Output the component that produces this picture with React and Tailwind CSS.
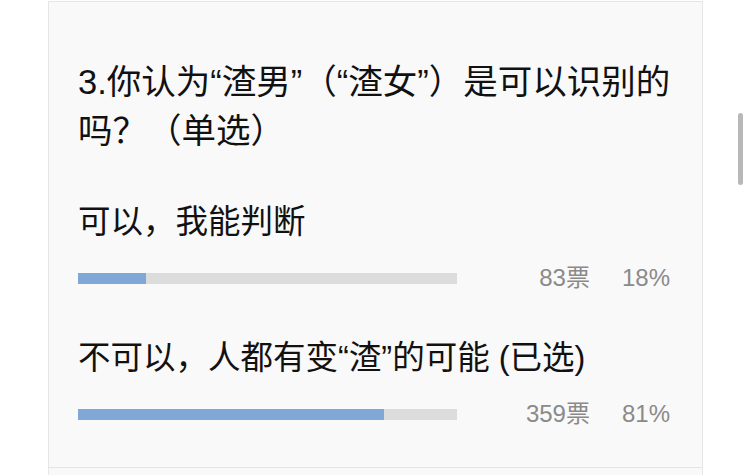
import React from "react";

const options = [
  { label: "可以，我能判断", votes: 83, percent: 18, fill: "w-[68px]" },
  { label: "不可以，人都有变“渣”的可能 (已选)", votes: 359, percent: 81, fill: "w-[306px]" },
];

export default function App() {
  return (
    <div
      className="relative h-[475px] w-[750px] overflow-hidden bg-white"
      style={{ fontFamily: '"Liberation Sans", "Noto Sans CJK SC", sans-serif' }}
    >
      <div className="ml-[48px] mt-[1px] w-[655px] border-x border-t border-[#e6e6e6] bg-[#f9f9f9]">
        <div className="border-b border-[#e4e4e4] pl-[29px] pr-[32px] pt-[56px] pb-[41px]">
          <h2 className="whitespace-nowrap text-[34.5px] font-normal leading-[49px] text-[#111] [text-spacing-trim:space-all]">
            3.你认为“渣男”（“渣女”）是可以识别的
            <br />
            吗？（单选）
          </h2>

          {options.map((opt, i) => (
            <div key={i} className={i === 0 ? "mt-[46px]" : "mt-[48px]"}>
              <p className="text-[32.5px] leading-[40px] text-[#111]">{opt.label}</p>
              <div className="mt-[24px] flex h-[24px] items-center">
                <div className="h-[11px] w-[379px] bg-[#dcdcdc]">
                  <div className={`h-full ${opt.fill} bg-[#7fa8d6]`} />
                </div>
                <span className="ml-auto text-[24px] leading-[24px] text-[#8a8a8a]">
                  {opt.votes}票
                </span>
                <span className="ml-[32px] text-[24px] leading-[24px] text-[#8a8a8a]">
                  {opt.percent}%
                </span>
              </div>
            </div>
          ))}
        </div>
        <div className="h-[20px]" />
      </div>

      {/* scroll thumb */}
      <div className="absolute left-[738px] top-[113px] h-[72px] w-[5px] rounded-full bg-[#b8b8b8]" />
    </div>
  );
}
